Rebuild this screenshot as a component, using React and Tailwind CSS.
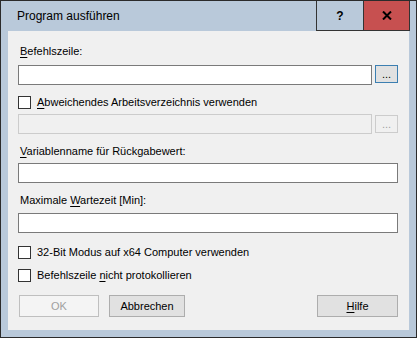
import React from "react";

const font = { fontFamily: '"Liberation Sans", Arial, sans-serif' };

const Key = ({ children }) => <span className="underline underline-offset-[2px]">{children}</span>;

const Label = ({ children, className = "" }) => (
  <div className={`h-[13px] leading-[13px] text-[11px] text-black ml-[2px] ${className}`}>{children}</div>
);

const TextBox = ({ disabled, className = "" }) => (
  <div
    className={`h-[20px] border ${
      disabled ? "border-[#cccccc] bg-[#f0f0f0]" : "border-[#7a7a7a] bg-white"
    } ${className}`}
  />
);

const Ellipsis = ({ disabled, focused }) => (
  <div
    className={`w-[23px] h-[18px] mt-0 ml-[3px] flex items-end justify-center pb-[2px] text-[11px] leading-[11px] border ${
      focused
        ? "border-[#3c7fb1] bg-[#e1e1e1] text-black"
        : "border-[#cccccc] bg-[#f0f0f0] text-[#a0a0a0]"
    }`}
  >
    ...
  </div>
);

const Check = ({ children, className = "" }) => (
  <div className={`flex items-center h-[13px] ${className}`}>
    <div className="w-[13px] h-[13px] border border-[#333333] bg-white" />
    <span className="ml-[6px] text-[11px] leading-[13px] text-black">{children}</span>
  </div>
);

const Btn = ({ children, disabled, className = "" }) => (
  <div
    className={`h-[22px] flex items-center justify-center text-[11px] border ${
      disabled
        ? "border-[#bfbfbf] bg-[#f4f4f4] text-[#a0a0a0]"
        : "border-[#adadad] bg-[#e1e1e1] text-black"
    } ${className}`}
  >
    {children}
  </div>
);

export default function App() {
  return (
    <div className="w-[417px] h-[338px] bg-[#b9c9da] border border-[#2b2b2b] flex flex-col" style={font}>
      {/* Title bar */}
      <div className="h-[30px] flex shrink-0">
        <div className="flex-1 pl-[16px] pt-[8px] text-[12px] leading-[14px] text-black">
          Program ausführen
        </div>
        <div className="w-[47px] border-l border-b border-[#333333] flex items-center justify-center text-[12px] font-bold">
          ?
        </div>
        <div className="w-[47px] border-l border-r border-b border-[#333333] bg-[#c75050] flex items-center justify-center">
          <svg width="10" height="9" viewBox="0 0 10 9">
            <path d="M1 0.5 L9 8.5 M9 0.5 L1 8.5" stroke="#000" strokeWidth="2" />
          </svg>
        </div>
        <div className="w-[6px]" />
      </div>

      {/* Body */}
      <div className="mx-[7px] h-[299px] bg-[#f0f0f0] pl-[10px] pr-[11px] flex flex-col">
        <Label className="mt-[14px]">
          <Key>B</Key>efehlszeile:
        </Label>
        <div className="flex mt-[7px]">
          <TextBox className="flex-1" />
          <Ellipsis focused />
        </div>

        <Check className="mt-[11px]">
          <Key>A</Key>bweichendes Arbeitsverzeichnis verwenden
        </Check>
        <div className="flex mt-[5px]">
          <TextBox disabled className="flex-1" />
          <div className="mt-[1px]">
            <Ellipsis />
          </div>
        </div>

        <Label className="mt-[11px]">
          <Key>V</Key>ariablenname für Rückgabewert:
        </Label>
        <TextBox className="mt-[5px]" />

        <Label className="mt-[11px]">
          Maximale <Key>W</Key>artezeit [Min]:
        </Label>
        <TextBox className="mt-[6px]" />

        <Check className="mt-[13px]">32-Bit Modus auf x64 Computer verwenden</Check>
        <Check className="mt-[10px]">
          Befehlszeile <Key>n</Key>icht protokollieren
        </Check>

        <div className="flex mt-[13px]">
          <Btn disabled className="w-[80px] ml-[1px]">
            OK
          </Btn>
          <Btn className="w-[76px] ml-[10px]">Abbrechen</Btn>
          <div className="flex-1" />
          <Btn className="w-[81px]">
            <Key>H</Key>ilfe
          </Btn>
        </div>
      </div>
    </div>
  );
}
